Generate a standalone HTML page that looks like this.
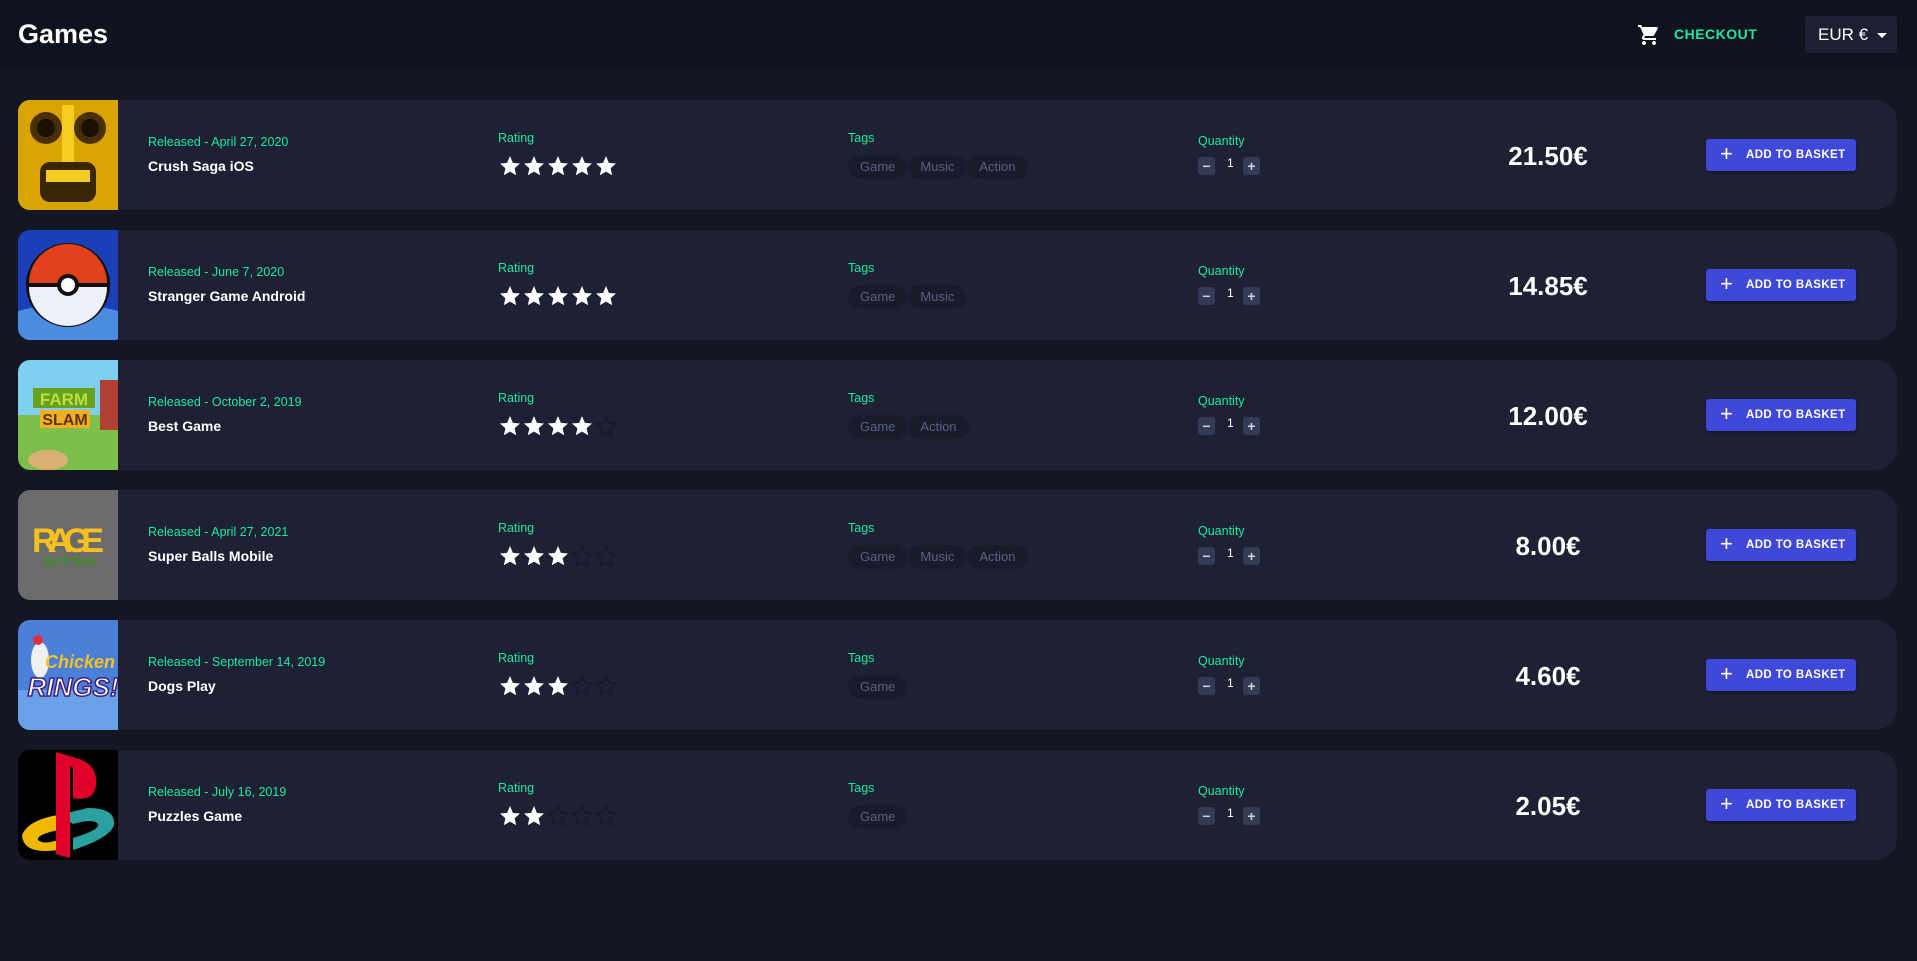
<!DOCTYPE html>
<html><head><meta charset="utf-8"><style>
*{margin:0;padding:0;box-sizing:border-box}
body{width:1917px;height:961px;background:#141624;font-family:"Liberation Sans",Arial,sans-serif;overflow:hidden;position:relative}
.hdr{position:absolute;left:0;top:0;width:1917px;height:70px;background:#10131f}
.title{position:absolute;left:18px;top:19px;font-size:27px;font-weight:bold;color:#fff}
.co{position:absolute;left:1674px;top:26px;font-size:14px;font-weight:bold;color:#1de9a0;letter-spacing:.5px}
.cart{position:absolute;left:1637px;top:23px}
.eur{position:absolute;left:1805px;top:16px;width:92px;height:37px;background:#1d2032;border-radius:3px;color:#fff;font-size:17px;line-height:37px;padding-left:13px}
.eur:after{content:"";position:absolute;left:72px;top:17px;border:5px solid transparent;border-top:5px solid #fff}
.card{position:absolute;left:18px;width:1879px;height:110px;background:#1e2133;border-radius:12px 22px 22px 12px}
.img{position:absolute;left:0;top:0;width:100px;height:110px;border-radius:12px 0 0 12px;overflow:hidden}
.lbl{position:absolute;color:#1de9a0;font-size:12.5px}
.rel{left:130px;top:35px}
.name{position:absolute;left:130px;top:58px;color:#fff;font-weight:bold;font-size:14px}
.rt{left:480px;top:31px}
.stars{position:absolute;left:480px;top:54px;display:flex}
.stars svg{width:24px;height:24px}
.tg{left:830px;top:31px}
.tags{position:absolute;left:830px;top:55px;display:flex;gap:1px}
.tag{height:24px;line-height:24px;border-radius:12px;background:#181b2a;color:#5c6180;font-size:13px;padding:0 12px}
.qt{left:1180px;top:34px}
.qb{position:absolute;top:57px;width:17px;height:18px;background:#353a55;border-radius:3px;color:#cfd2e0;font-size:14px;line-height:18px;text-align:center;font-weight:bold}
.qn{position:absolute;left:1209px;top:56px;color:#fff;font-size:12px}
.price{position:absolute;left:1430px;width:200px;text-align:center;top:41px;color:#fff;font-size:26px;font-weight:bold}
.btn{position:absolute;left:1688px;top:39px;width:150px;height:32px;background:#3f48d8;border-radius:3px;color:#fff;font-size:11.5px;font-weight:bold;line-height:32px;padding-left:40px;letter-spacing:.4px;box-shadow:0 2px 3px rgba(0,0,0,.3)}
.btn:before{content:"+";position:absolute;left:14px;top:-1px;font-size:22px;font-weight:normal}
</style></head><body>
<div class="hdr"></div>
<div class="title">Games</div>
<svg class="cart" width="24" height="24" viewBox="0 0 24 24"><path fill="#fff" d="M7 18c-1.1 0-2 .9-2 2s.9 2 2 2 2-.9 2-2-.9-2-2-2zM1 2v2h2l3.6 7.6-1.4 2.4c-.1.3-.2.6-.2 1 0 1.1.9 2 2 2h12v-2H7.4c-.1 0-.2-.1-.2-.2v-.1l.9-1.7h7.4c.8 0 1.4-.4 1.7-1l3.6-6.5c.1-.2.1-.3.1-.5 0-.6-.4-1-1-1H5.2l-.9-2H1zm16 16c-1.1 0-2 .9-2 2s.9 2 2 2 2-.9 2-2-.9-2-2-2z"/></svg>
<div class="co">CHECKOUT</div>
<div class="eur">EUR €</div>

<svg width="0" height="0" style="position:absolute"><defs>
<path id="st" d="M12 2l2.9 6.9 7.1.6-5.4 4.7 1.6 7.1L12 17.6 5.8 21.3l1.6-7.1L2 9.5l7.1-.6z"/>
</defs></svg>

<div class="card" style="top:100px">
 <div class="img" style="background:#e8b800"><svg width="100" height="110"><rect width="100" height="110" fill="#d9a400"/><circle cx="28" cy="28" r="16" fill="#4a3000"/><circle cx="28" cy="28" r="9" fill="#1a1000"/><circle cx="72" cy="28" r="16" fill="#4a3000"/><circle cx="72" cy="28" r="9" fill="#1a1000"/><rect x="44" y="5" width="12" height="60" fill="#f5cd20"/><rect x="22" y="62" width="56" height="40" rx="10" fill="#3a2600"/><rect x="28" y="70" width="44" height="12" fill="#f5cd20"/></svg></div>
 <div class="lbl rel">Released - April 27, 2020</div><div class="name">Crush Saga iOS</div>
 <div class="lbl rt">Rating</div><div class="stars"><svg><use href="#st" fill="#fff"/></svg><svg><use href="#st" fill="#fff"/></svg><svg><use href="#st" fill="#fff"/></svg><svg><use href="#st" fill="#fff"/></svg><svg><use href="#st" fill="#fff"/></svg></div>
 <div class="lbl tg">Tags</div><div class="tags"><span class="tag">Game</span><span class="tag">Music</span><span class="tag">Action</span></div>
 <div class="lbl qt">Quantity</div><div class="qb" style="left:1180px">−</div><div class="qn">1</div><div class="qb" style="left:1225px">+</div>
 <div class="price">21.50€</div><div class="btn">ADD TO BASKET</div>
</div>

<div class="card" style="top:230px">
 <div class="img"><svg width="100" height="110"><rect width="100" height="110" fill="#1a3fb8"/><ellipse cx="50" cy="95" rx="70" ry="20" fill="#4a8ce0"/><circle cx="50" cy="55" r="42" fill="#111"/><path d="M11 53a39 39 0 0 1 78 0z" fill="#e0401a"/><path d="M11 57a39 39 0 0 0 78 0z" fill="#eef0f8"/><circle cx="50" cy="55" r="11" fill="#111"/><circle cx="50" cy="55" r="7" fill="#fff"/></svg></div>
 <div class="lbl rel">Released - June 7, 2020</div><div class="name">Stranger Game Android</div>
 <div class="lbl rt">Rating</div><div class="stars"><svg><use href="#st" fill="#fff"/></svg><svg><use href="#st" fill="#fff"/></svg><svg><use href="#st" fill="#fff"/></svg><svg><use href="#st" fill="#fff"/></svg><svg><use href="#st" fill="#fff"/></svg></div>
 <div class="lbl tg">Tags</div><div class="tags"><span class="tag">Game</span><span class="tag">Music</span></div>
 <div class="lbl qt">Quantity</div><div class="qb" style="left:1180px">−</div><div class="qn">1</div><div class="qb" style="left:1225px">+</div>
 <div class="price">14.85€</div><div class="btn">ADD TO BASKET</div>
</div>

<div class="card" style="top:360px">
 <div class="img"><svg width="100" height="110"><rect width="100" height="60" fill="#7fd0f0"/><rect y="55" width="100" height="55" fill="#7cbf4a"/><rect x="82" y="20" width="18" height="50" fill="#b04030"/><rect x="15" y="28" width="62" height="20" fill="#6aa020"/><rect x="22" y="50" width="50" height="18" fill="#f0b020"/><text x="46" y="45" font-family="Liberation Sans" font-weight="bold" font-size="17" fill="#b8e040" text-anchor="middle">FARM</text><text x="47" y="65" font-family="Liberation Sans" font-weight="bold" font-size="16" fill="#603000" text-anchor="middle">SLAM</text><ellipse cx="30" cy="100" rx="20" ry="10" fill="#d8b070"/></svg></div>
 <div class="lbl rel">Released - October 2, 2019</div><div class="name">Best Game</div>
 <div class="lbl rt">Rating</div><div class="stars"><svg><use href="#st" fill="#fff"/></svg><svg><use href="#st" fill="#fff"/></svg><svg><use href="#st" fill="#fff"/></svg><svg><use href="#st" fill="#fff"/></svg><svg><use href="#st" fill="none" stroke="#151826" stroke-width="1.2"/></svg></div>
 <div class="lbl tg">Tags</div><div class="tags"><span class="tag">Game</span><span class="tag">Action</span></div>
 <div class="lbl qt">Quantity</div><div class="qb" style="left:1180px">−</div><div class="qn">1</div><div class="qb" style="left:1225px">+</div>
 <div class="price">12.00€</div><div class="btn">ADD TO BASKET</div>
</div>

<div class="card" style="top:490px">
 <div class="img"><svg width="100" height="110"><rect width="100" height="110" fill="#6b6b6b"/><text x="50" y="62" font-family="Liberation Sans" font-weight="bold" font-size="34" fill="#f5c020" text-anchor="middle" textLength="72">RAGE</text><text x="52" y="75" font-family="Liberation Sans" font-weight="bold" font-size="11" fill="#3a9020" text-anchor="middle">QUITTERS</text></svg></div>
 <div class="lbl rel">Released - April 27, 2021</div><div class="name">Super Balls Mobile</div>
 <div class="lbl rt">Rating</div><div class="stars"><svg><use href="#st" fill="#fff"/></svg><svg><use href="#st" fill="#fff"/></svg><svg><use href="#st" fill="#fff"/></svg><svg><use href="#st" fill="none" stroke="#151826" stroke-width="1.2"/></svg><svg><use href="#st" fill="none" stroke="#151826" stroke-width="1.2"/></svg></div>
 <div class="lbl tg">Tags</div><div class="tags"><span class="tag">Game</span><span class="tag">Music</span><span class="tag">Action</span></div>
 <div class="lbl qt">Quantity</div><div class="qb" style="left:1180px">−</div><div class="qn">1</div><div class="qb" style="left:1225px">+</div>
 <div class="price">8.00€</div><div class="btn">ADD TO BASKET</div>
</div>

<div class="card" style="top:620px">
 <div class="img"><svg width="100" height="110"><rect width="100" height="110" fill="#4a80d8"/><rect y="70" width="100" height="40" fill="#6aa0e8"/><ellipse cx="22" cy="40" rx="9" ry="18" fill="#f0f0f0"/><circle cx="20" cy="20" r="5" fill="#e03040"/><text x="62" y="48" font-family="Liberation Sans" font-weight="bold" font-style="italic" font-size="18" fill="#f8c020" text-anchor="middle">Chicken</text><text x="55" y="76" font-family="Liberation Sans" font-weight="bold" font-style="italic" font-size="26" fill="#fff" stroke="#402080" stroke-width="1.5" text-anchor="middle">RINGS!</text></svg></div>
 <div class="lbl rel">Released - September 14, 2019</div><div class="name">Dogs Play</div>
 <div class="lbl rt">Rating</div><div class="stars"><svg><use href="#st" fill="#fff"/></svg><svg><use href="#st" fill="#fff"/></svg><svg><use href="#st" fill="#fff"/></svg><svg><use href="#st" fill="none" stroke="#151826" stroke-width="1.2"/></svg><svg><use href="#st" fill="none" stroke="#151826" stroke-width="1.2"/></svg></div>
 <div class="lbl tg">Tags</div><div class="tags"><span class="tag">Game</span></div>
 <div class="lbl qt">Quantity</div><div class="qb" style="left:1180px">−</div><div class="qn">1</div><div class="qb" style="left:1225px">+</div>
 <div class="price">4.60€</div><div class="btn">ADD TO BASKET</div>
</div>

<div class="card" style="top:750px">
 <div class="img"><svg width="100" height="110"><rect width="100" height="110" fill="#000"/><path d="M4 85 Q10 70 40 65 L40 80 Q18 85 20 90 Q25 95 40 90 L40 100 Q5 105 4 85z" fill="#f0b800"/><path d="M40 65 L70 58 Q98 58 96 75 Q92 88 55 100 L55 88 Q82 80 80 74 Q76 68 55 74z" fill="#2aa0a0"/><path d="M38 2 L58 8 Q80 14 78 35 Q76 52 55 48 L55 20 Q55 16 52 16 L52 108 L38 104z" fill="#e0002a"/></svg></div>
 <div class="lbl rel">Released - July 16, 2019</div><div class="name">Puzzles Game</div>
 <div class="lbl rt">Rating</div><div class="stars"><svg><use href="#st" fill="#fff"/></svg><svg><use href="#st" fill="#fff"/></svg><svg><use href="#st" fill="none" stroke="#151826" stroke-width="1.2"/></svg><svg><use href="#st" fill="none" stroke="#151826" stroke-width="1.2"/></svg><svg><use href="#st" fill="none" stroke="#151826" stroke-width="1.2"/></svg></div>
 <div class="lbl tg">Tags</div><div class="tags"><span class="tag">Game</span></div>
 <div class="lbl qt">Quantity</div><div class="qb" style="left:1180px">−</div><div class="qn">1</div><div class="qb" style="left:1225px">+</div>
 <div class="price">2.05€</div><div class="btn">ADD TO BASKET</div>
</div>
</body></html>
